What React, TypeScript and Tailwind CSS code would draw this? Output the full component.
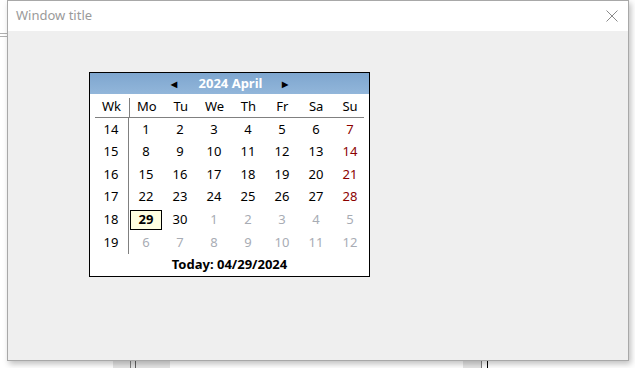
import React from 'react';

const weeks: { wk: number; days: { d: number; muted?: boolean }[] }[] = [
  { wk: 14, days: [1, 2, 3, 4, 5, 6, 7].map((d) => ({ d })) },
  { wk: 15, days: [8, 9, 10, 11, 12, 13, 14].map((d) => ({ d })) },
  { wk: 16, days: [15, 16, 17, 18, 19, 20, 21].map((d) => ({ d })) },
  { wk: 17, days: [22, 23, 24, 25, 26, 27, 28].map((d) => ({ d })) },
  { wk: 18, days: [{ d: 29 }, { d: 30 }, ...[1, 2, 3, 4, 5].map((d) => ({ d, muted: true }))] },
  { wk: 19, days: [6, 7, 8, 9, 10, 11, 12].map((d) => ({ d, muted: true })) },
];

const dayNames = ['Mo', 'Tu', 'We', 'Th', 'Fr', 'Sa', 'Su'];

function Calendar() {
  return (
    <div className="w-[281px] h-[205px] border border-black bg-white flex flex-col">
      <div className="h-[21px] bg-gradient-to-b from-[#7ea6cf] to-[#92b6da] flex items-center justify-center text-white font-bold text-[13px]">
        <span className="text-black text-[8px] mr-[22px]">◀</span>
        <span>2024 April</span>
        <span className="text-black text-[8px] ml-[20px]">▶</span>
      </div>
      <div className="pl-[4px] pr-[2px]">
        <div className="flex h-[23px] items-center">
          <div className="w-[35px] text-center pt-[2px]">Wk</div>
          <div className="w-px self-end h-[19px] bg-[#808080]" />
          {dayNames.map((n) => (
            <div key={n} className="w-[34px] text-center pt-[2px]">{n}</div>
          ))}
        </div>
        <div className="ml-[1px] mr-[3px] h-px bg-[#808080]" />
        <div className="flex">
          <div className="w-[35px]">
            {weeks.map((w) => (
              <div key={w.wk} className="h-[22.6px] flex items-center justify-center">{w.wk}</div>
            ))}
          </div>
          <div className="w-px bg-[#808080] h-[136px]" />
          <div>
            {weeks.map((w) => (
              <div key={w.wk} className="flex h-[22.6px]">
                {w.days.map((x, i) => {
                  const today = w.wk === 18 && x.d === 29;
                  const color = x.muted ? 'text-[#a8acb4]' : i === 6 ? 'text-[#8b0000]' : 'text-black';
                  return (
                    <div key={i} className="w-[34px] flex items-center justify-center">
                      {today ? (
                        <div className="w-[32px] h-[20px] border border-black bg-[#ffffe1] font-bold flex items-center justify-center">
                          {x.d}
                        </div>
                      ) : (
                        <span className={color}>{x.d}</span>
                      )}
                    </div>
                  );
                })}
              </div>
            ))}
          </div>
        </div>
      </div>
      <div className="flex-1 flex items-center justify-center font-bold">Today: 04/29/2024</div>
    </div>
  );
}

export default function App() {
  return (
    <div
      className="relative w-[635px] h-[368px] bg-white overflow-hidden text-[13px] text-black"
      style={{ fontFamily: '"Noto Sans", "Open Sans", sans-serif' }}
    >
      {/* windows behind the dialog */}
      <div className="absolute left-0 top-[33px] w-[7px] h-px bg-[#b0b0b0]" />
      <div className="absolute left-0 top-[36px] w-[7px] h-px bg-[#b0b0b0]" />
      <div className="absolute left-[130px] top-0 w-px h-[3px] bg-[#909090]" />
      <div className="absolute left-[482px] top-0 w-px h-[3px] bg-[#909090]" />
      <div className="absolute left-[113px] top-[355px] w-[57px] h-[13px] bg-[#e6e6e6]" />
      <div className="absolute left-[130px] top-[355px] w-px h-[13px] bg-[#808080]" />
      <div className="absolute left-[135px] top-[355px] w-px h-[13px] bg-[#606060]" />
      <div className="absolute left-[463px] top-[355px] w-[19px] h-[13px] bg-[#e6e6e6]" />
      <div className="absolute left-[481px] top-[355px] w-px h-[13px] bg-[#808080]" />
      <div className="absolute left-[487px] top-[355px] w-px h-[13px] bg-black" />

      <div className="absolute left-[7px] top-0 w-[622px] h-[361px] border border-[#a8a8a8] bg-[#efefef] flex flex-col shadow-[2px_3px_6px_rgba(0,0,0,0.25)]">
        <div className="h-[30px] bg-white flex items-center justify-between pl-[8px] pr-[10px] shrink-0">
          <span className="text-[#9a9a9a] text-[13px]">Window title</span>
          <svg width="12" height="12" viewBox="0 0 12 12" className="stroke-[#8a8a8a]">
            <path d="M0.5 0.5 L11.5 11.5 M11.5 0.5 L0.5 11.5" strokeWidth="1" />
          </svg>
        </div>
        <div className="pl-[81px] pt-[41px]">
          <Calendar />
        </div>
      </div>
    </div>
  );
}
